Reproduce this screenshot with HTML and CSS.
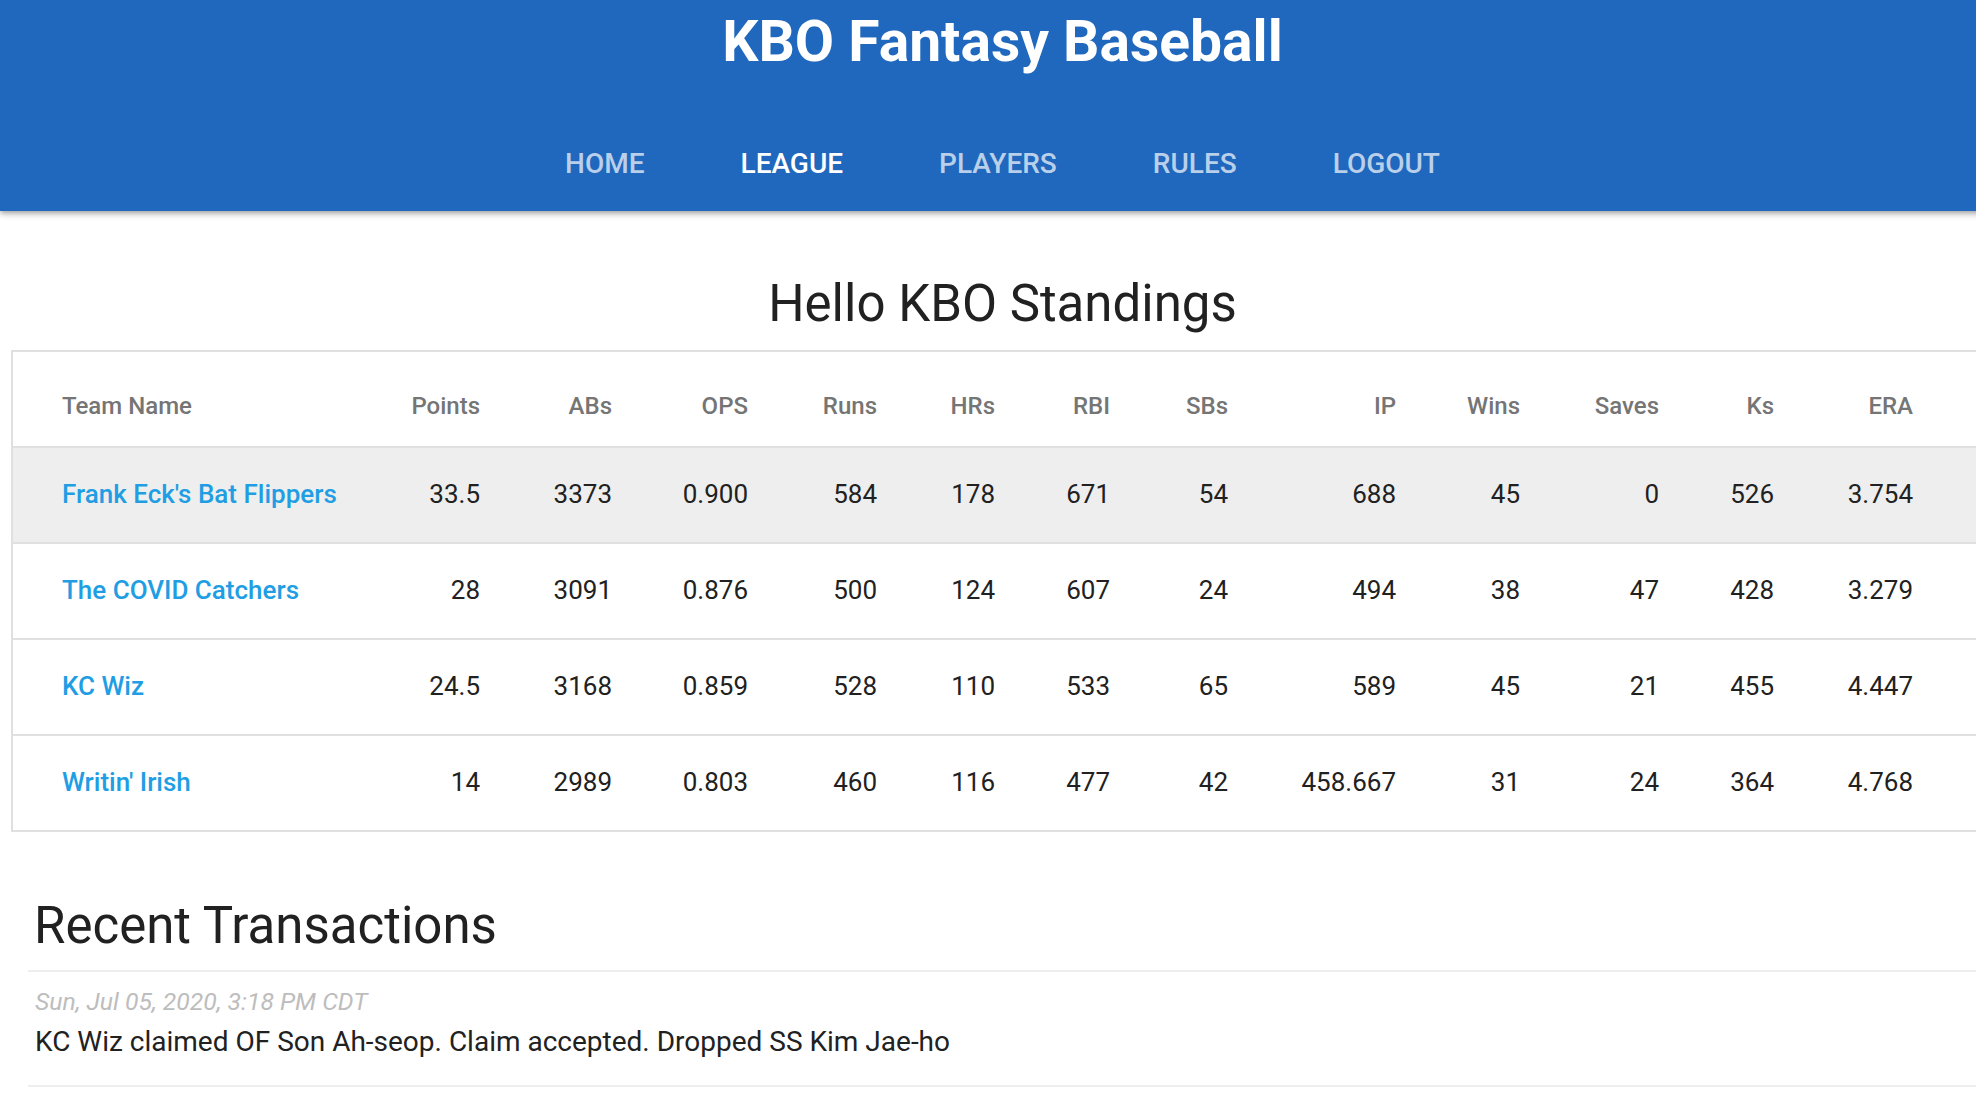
FILE: index.html
```html
<!DOCTYPE html>
<html lang="en">
<head>
<meta charset="utf-8">
<title>KBO Fantasy Baseball</title>
<link rel="stylesheet" href="styles.css">
</head>
<body>
<div class="page">
  <header class="appbar">
    <div class="brand">KBO Fantasy Baseball</div>
    <nav class="tabs">
      <a class="tab" href="#">Home</a>
      <a class="tab tab-active" href="#">League</a>
      <a class="tab" href="#">Players</a>
      <a class="tab" href="#">Rules</a>
      <a class="tab" href="#">Logout</a>
    </nav>
  </header>

  <main class="content">
    <h1 class="page-title">Hello KBO Standings</h1>

    <table class="standings">
      <colgroup>
        <col class="c-team"><col class="c-points"><col class="c-abs"><col class="c-ops"><col class="c-runs"><col class="c-hrs"><col class="c-rbi"><col class="c-sbs"><col class="c-ip"><col class="c-wins"><col class="c-saves"><col class="c-ks"><col class="c-era"><col class="c-rest">
      </colgroup>
      <thead>
        <tr>
          <th class="name">Team Name</th>
          <th>Points</th><th>ABs</th><th>OPS</th><th>Runs</th><th>HRs</th><th>RBI</th><th>SBs</th><th>IP</th><th>Wins</th><th>Saves</th><th>Ks</th><th>ERA</th><th class="rest"></th>
        </tr>
      </thead>
      <tbody>
        <tr class="selected">
          <td class="name"><a href="#">Frank Eck's Bat Flippers</a></td>
          <td>33.5</td><td>3373</td><td>0.900</td><td>584</td><td>178</td><td>671</td><td>54</td><td>688</td><td>45</td><td>0</td><td>526</td><td>3.754</td><td class="rest"></td>
        </tr>
        <tr>
          <td class="name"><a href="#">The COVID Catchers</a></td>
          <td>28</td><td>3091</td><td>0.876</td><td>500</td><td>124</td><td>607</td><td>24</td><td>494</td><td>38</td><td>47</td><td>428</td><td>3.279</td><td class="rest"></td>
        </tr>
        <tr>
          <td class="name"><a href="#">KC Wiz</a></td>
          <td>24.5</td><td>3168</td><td>0.859</td><td>528</td><td>110</td><td>533</td><td>65</td><td>589</td><td>45</td><td>21</td><td>455</td><td>4.447</td><td class="rest"></td>
        </tr>
        <tr>
          <td class="name"><a href="#">Writin' Irish</a></td>
          <td>14</td><td>2989</td><td>0.803</td><td>460</td><td>116</td><td>477</td><td>42</td><td>458.667</td><td>31</td><td>24</td><td>364</td><td>4.768</td><td class="rest"></td>
        </tr>
      </tbody>
    </table>

    <section class="transactions">
      <h2 class="section-title">Recent Transactions</h2>
      <ul class="tx-list">
        <li class="tx">
          <div class="tx-date">Sun, Jul 05, 2020, 3:18 PM CDT</div>
          <div class="tx-text">KC Wiz claimed OF Son Ah-seop. Claim accepted. Dropped SS Kim Jae-ho</div>
        </li>
      </ul>
    </section>
  </main>
</div>
</body>
</html>
```

FILE: styles.css
```css
html, body {
  margin: 0;
  padding: 0;
  overflow: hidden;
  background: #ffffff;
}

body {
  font-family: Roboto, "Helvetica Neue", Arial, sans-serif;
  color: #212121;
}

.page {
  width: 2005px;
}

/* ---------- App bar ---------- */
.appbar {
  background: #1f68bd;
  height: 211px;
  display: flex;
  flex-direction: column;
  align-items: center;
  box-shadow: 0 2px 4px -1px rgba(0,0,0,0.2), 0 4px 5px 0 rgba(0,0,0,0.14), 0 1px 10px 0 rgba(0,0,0,0.12);
  position: relative;
  z-index: 1;
}

.brand {
  color: #ffffff;
  font-size: 57px;
  font-weight: 700;
  line-height: 68px;
  padding-top: 8px;
  height: 108px;
  box-sizing: content-box;
}

.tabs {
  display: flex;
  height: 95px;
}

.tab {
  display: flex;
  align-items: center;
  padding: 0 48px;
  font-size: 28px;
  font-weight: 500;
  text-transform: uppercase;
  text-decoration: none;
  color: rgba(255,255,255,0.7);
}

.tab-active {
  color: #ffffff;
}

/* ---------- Content ---------- */
.page-title {
  margin: 64px 0 17px;
  text-align: center;
  font-size: 51px;
  font-weight: 400;
  line-height: 58px;
  color: #212121;
}

.standings {
  margin-left: 11px;
  border-collapse: separate;
  border-spacing: 0;
  table-layout: fixed;
  width: 1982px;
  border-top: 2px solid #e0e0e0;
  border-left: 2px solid #e0e0e0;
}

.c-team { width: 361px; }
.c-points { width: 143px; }
.c-abs { width: 132px; }
.c-ops { width: 136px; }
.c-runs { width: 129px; }
.c-hrs { width: 118px; }
.c-rbi { width: 115px; }
.c-sbs { width: 118px; }
.c-ip { width: 168px; }
.c-wins { width: 124px; }
.c-saves { width: 139px; }
.c-ks { width: 115px; }
.c-era { width: 139px; }
.c-rest { width: 43px; }

.standings th,
.standings td {
  box-sizing: border-box;
  height: 96px;
  border-bottom: 2px solid #e0e0e0;
  text-align: right;
  padding: 0 37px 0 0;
  white-space: nowrap;
  vertical-align: middle;
}

.standings th {
  font-size: 24px;
  font-weight: 500;
  color: #757575;
  padding-top: 14px;
}

.standings td {
  font-size: 26px;
  font-weight: 400;
  color: #212121;
  padding-bottom: 2px;
}

.standings .name {
  text-align: left;
  padding-left: 49px;
}

.standings .rest {
  padding: 0;
}

.standings td.name a {
  color: #219ee3;
  font-weight: 500;
  text-decoration: none;
}

.standings tr.selected td {
  background: #eeeeee;
}

/* ---------- Transactions ---------- */
.transactions {
  margin-top: 65px;
}

.section-title {
  margin: 0 0 15px;
  padding-left: 34px;
  font-size: 51px;
  font-weight: 400;
  line-height: 58px;
  color: #212121;
}

.tx-list {
  list-style: none;
  margin: 0 0 0 28px;
  padding: 0;
  border-top: 2px solid #eeeeee;
}

.tx {
  padding: 14px 0 0 7px;
  height: 115px;
  box-sizing: border-box;
  border-bottom: 2px solid #eeeeee;
}

.tx-date {
  font-size: 24.75px;
  font-style: italic;
  color: #bdbdbd;
  line-height: 32px;
}

.tx-text {
  font-size: 28px;
  color: #212121;
  line-height: 36px;
  margin-top: 6px;
}
```
